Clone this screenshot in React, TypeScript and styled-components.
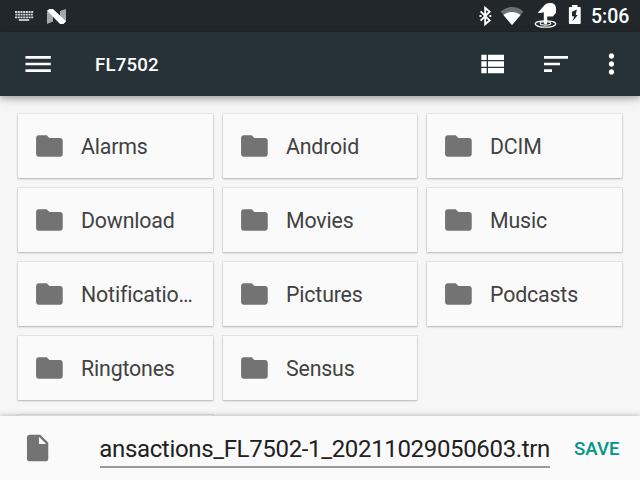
import React from "react";
import styled, { createGlobalStyle } from "styled-components";

const GlobalStyle = createGlobalStyle`
  body { margin: 0; overflow: hidden; font-family: Roboto, sans-serif; }
  * { box-sizing: border-box; }
`;

const Screen = styled.div`
  width: 640px;
  height: 480px;
  display: flex;
  flex-direction: column;
  overflow: hidden;
  background: #f6f6f6;
`;

const StatusBar = styled.header`
  height: 32px;
  flex: none;
  display: flex;
  align-items: center;
  justify-content: space-between;
  padding: 0 11px 0 14px;
  background: #21272a;
  color: #fff;
`;

const StatusGroup = styled.div`
  height: 32px;
  display: flex;
  align-items: center;
`;

const Clock = styled.time`
  width: 38px;
  margin-left: 9px;
  padding-top: 1px;
  font-size: 19.5px;
  font-weight: 500;
  line-height: 32px;
  white-space: nowrap;
`;

const Icon = styled.svg<{ $size?: number; $gap?: number }>`
  display: block;
  flex: none;
  width: ${(p) => p.$size ?? 32}px;
  height: ${(p) => p.$size ?? 32}px;
  margin-left: ${(p) => p.$gap ?? 0}px;
`;

const StatusIcon = styled.svg<{ $w: number; $gap?: number }>`
  display: block;
  flex: none;
  width: ${(p) => p.$w}px;
  height: 32px;
  margin-left: ${(p) => p.$gap ?? 0}px;
`;

const Toolbar = styled.nav`
  height: 64px;
  flex: none;
  display: flex;
  align-items: center;
  padding: 0 12.2px 0 21.6px;
  background: #263238;
  color: #fff;
  z-index: 1;
  box-shadow: 0 2px 6px rgba(0, 0, 0, 0.28), 0 4px 12px rgba(0, 0, 0, 0.12);
`;

const Title = styled.h1`
  margin: 1px auto 0 41.5px;
  font-size: 18.67px;
  font-weight: 500;
  line-height: 24px;
  letter-spacing: 0.15px;
`;

const Content = styled.main`
  height: 320px;
  flex: none;
  overflow: hidden;
  padding: 18px 18px 0;
`;

const Grid = styled.div`
  display: grid;
  grid-template-columns: 195px 194px 195px;
  grid-auto-rows: 64px;
  gap: 10px;
`;

const FileRow = styled(Grid)`
  margin-top: 15px;
`;

const Card = styled.div`
  display: flex;
  align-items: center;
  padding: 0 15px;
  background: #fafafa;
  color: #424242;
  box-shadow: 0 0 0 1px rgba(0, 0, 0, 0.06), 0 1px 2px rgba(0, 0, 0, 0.22);
`;

const FolderName = styled.span`
  flex: 1;
  min-width: 0;
  margin: 1px 0 0 16px;
  font-size: 21.33px;
  line-height: 28px;
  letter-spacing: -0.16px;
  overflow: hidden;
  white-space: nowrap;
  text-overflow: ellipsis;
`;

const SaveBar = styled.footer`
  height: 64px;
  flex: none;
  display: flex;
  align-items: center;
  padding: 0 20px 0 21.5px;
  background: #fafafa;
  z-index: 1;
  box-shadow: 0 -1px 5px rgba(0, 0, 0, 0.22);
`;

const NameField = styled.div`
  width: 450px;
  height: 36px;
  margin: 4px 24px 0 46.5px;
  padding-top: 2px;
  display: flex;
  justify-content: flex-end;
  overflow: hidden;
  border-bottom: 2px solid #9a9a9a;
  color: #212121;
  font-size: 24px;
  line-height: 30px;
  letter-spacing: -0.34px;
  white-space: nowrap;
`;

const SaveButton = styled.button`
  margin-top: 1px;
  padding: 0;
  border: 0;
  background: none;
  color: #009688;
  font: 500 18.67px/24px Roboto, sans-serif;
`;

const folders = [
  "Alarms", "Android", "DCIM",
  "Download", "Movies", "Music",
  "Notifications", "Pictures", "Podcasts",
  "Ringtones", "Sensus",
];

const paths = {
  menu: "M2.6 18h19v-2h-19v2zm0-5h19v-2h-19v2zm0-7v2h19V6h-19z",
  list: "M4 14h4v-4H4v4zm0 5h4v-4H4v4zM4 9h4V5H4v4zm5 5h12v-4H9v4zm0 5h12v-4H9v4zM9 5v4h12V5H9z",
  sort: "M3 18h6v-2H3v2zM3 6v2h18V6H3zm0 7h12v-2H3v2z",
  more: "M11.6 8c1.1 0 2-.9 2-2s-.9-2-2-2-2 .9-2 2 .9 2 2 2zm0 2c-1.1 0-2 .9-2 2s.9 2 2 2 2-.9 2-2-.9-2-2-2zm0 6c-1.1 0-2 .9-2 2s.9 2 2 2 2-.9 2-2-.9-2-2-2z",
  folder: "M10.3 4H4.300c-1.100 0-1.990.9-1.990 2L2.300 18c0 1.100.9 2 2 2h16c1.100 0 2-.9 2-2V8c0-1.100-.9-2-2-2h-8l-2-2z",
  file: "M5.700 2c-1.100 0-1.990.9-1.990 2L3.700 20c0 1.100.89 2 1.990 2H17.700c1.100 0 2-.9 2-2V8l-6-6H5.700zm7 7V3.500L18.200 9H12.700z",
};

function Glyph({ name, color = "#fff", gap }: { name: keyof typeof paths; color?: string; gap?: number }) {
  return (
    <Icon viewBox="0 0 24 24" $gap={gap}>
      <path d={paths[name]} fill={color} />
    </Icon>
  );
}

function KeyboardIcon() {
  return (
    <StatusIcon viewBox="0 0 20 32" $w={20}>
      <g stroke="#d2d5d6" strokeWidth="1.8">
        <path d="M1 12h18.200" strokeDasharray="2.1 0.6" />
        <path d="M1.400 14.700h17.400" strokeDasharray="2 0.6" />
        <path d="M1 17.300h18.200" strokeDasharray="2.1 0.6" />
        <path d="M4.800 20h10.400" />
      </g>
    </StatusIcon>
  );
}

function NougatIcon() {
  return (
    <StatusIcon viewBox="0 0 20 32" $w={20} $gap={13}>
      <path d="M0 11.5 6 9v12.4L0 24zM13 11l6-2v12.5L13 24z" fill="#a5a8a9" />
      <path d="M0 10.5 2.500 9H6L19 21.300 16.500 24H13z" fill="#fff" />
    </StatusIcon>
  );
}

function BluetoothIcon() {
  return (
    <StatusIcon viewBox="0 0 14 32" $w={14}>
      <path d="m1.600 11.400 9 9-4.400 3.800V7.800l4.400 3.900-9 9" fill="none" stroke="#fff" strokeWidth="1.9" />
      <path d="M.5 15h1.900v2H.5zM10.400 15h1.900v2h-1.900z" fill="#fff" />
    </StatusIcon>
  );
}

function WifiIcon() {
  return (
    <StatusIcon viewBox="0 0 24 32" $w={24} $gap={7}>
      <path d="M.6 11.500C7.300 5.600 16.700 5.600 23.400 11.500L12 25z" fill="#6c7072" />
      <path d="M3.400 15.100c5-4.200 12.200-4.200 17.200 0L12 25z" fill="#fff" />
    </StatusIcon>
  );
}

function TouchIcon() {
  return (
    <StatusIcon viewBox="0 0 24 32" $w={24} $gap={10}>
      <g fill="none" stroke="#fff">
        <ellipse cx="11.500" cy="24" rx="10.200" ry="3.200" strokeWidth="1.300" />
        <ellipse cx="11.500" cy="23.400" rx="5.300" ry="1.700" strokeWidth="1.100" />
      </g>
      <path d="M3.800 12.800 10.400 5.200C12 3.400 14.400 2.800 17.200 3.100c3.200.4 4.800 2.500 4.800 5.500v4.200L18.800 16.500H13.200v6.500c0 1.500-3.400 1.500-3.400 0V12.200l-3.800.8z" fill="#fff" />
    </StatusIcon>
  );
}

function BatteryIcon() {
  return (
    <StatusIcon viewBox="0 0 14 32" $w={14} $gap={10}>
      <path fillRule="evenodd" d="M1.900 7h2.200V5h5.400v2h2.200c.6 0 1 .4 1 1v15.100c0 .6-.4 1-1 1H1.900c-.6 0-1-.4-1-1V8c0-.6.4-1 1-1zM8.900 9.500 4 11.800v4.400h2.100l-1.500 5.100 5.200-6.400H7.700z" fill="#fff" />
    </StatusIcon>
  );
}

export default function App() {
  return (
    <Screen>
      <GlobalStyle />
      <StatusBar>
        <StatusGroup>
          <KeyboardIcon />
          <NougatIcon />
        </StatusGroup>
        <StatusGroup>
          <BluetoothIcon />
          <WifiIcon />
          <TouchIcon />
          <BatteryIcon />
          <Clock>5:06</Clock>
        </StatusGroup>
      </StatusBar>
      <Toolbar>
        <Glyph name="menu" />
        <Title>FL7502</Title>
        <Glyph name="list" />
        <Glyph name="sort" gap={31.8} />
        <Glyph name="more" gap={23.7} />
      </Toolbar>
      <Content>
        <Grid>
          {folders.map((name) => (
            <Card key={name}>
              <Glyph name="folder" color="#737373" />
              <FolderName>{name}</FolderName>
            </Card>
          ))}
        </Grid>
        <FileRow>
          <Card />
        </FileRow>
      </Content>
      <SaveBar>
        <Glyph name="file" color="#737373" />
        <NameField>transactions_FL7502-1_20211029050603.trn</NameField>
        <SaveButton>SAVE</SaveButton>
      </SaveBar>
    </Screen>
  );
}
